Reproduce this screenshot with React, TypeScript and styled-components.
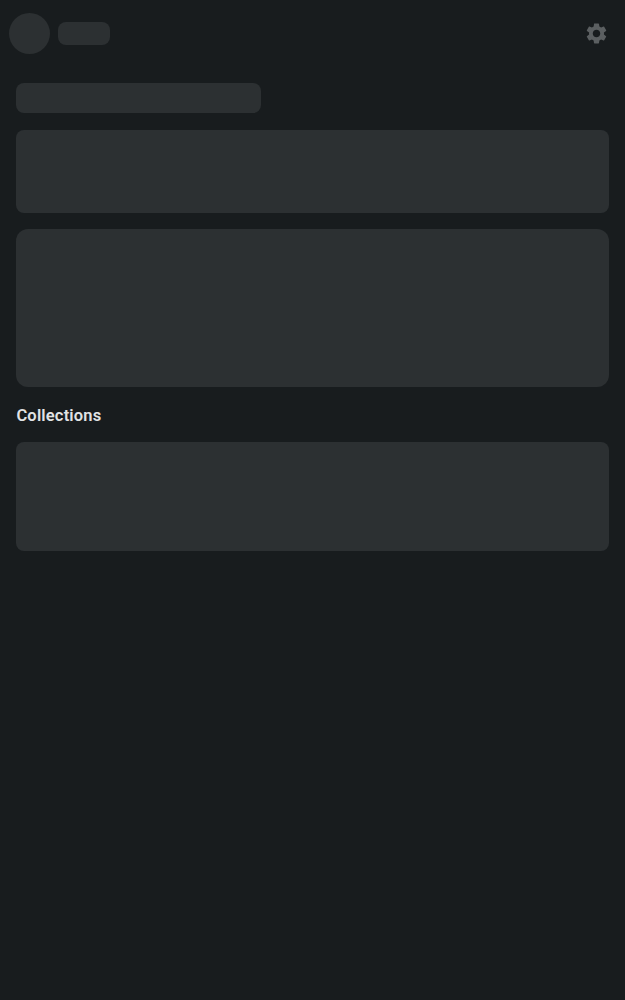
import React from 'react';
import styled, { createGlobalStyle } from 'styled-components';
import { MdSettings } from 'react-icons/md';

const GlobalStyle = createGlobalStyle`
  * { box-sizing: border-box; }
  body {
    margin: 0;
    background: #181c1e;
    font-family: Roboto, sans-serif;
  }
`;

const Screen = styled.div`
  min-height: 100vh;
  background: #181c1e;
`;

const Header = styled.header`
  display: flex;
  align-items: center;
  height: 66px;
  padding: 0 16px 0 8.5px;
`;

const Placeholder = styled.div<{ $height: number; $width?: string; $radius?: number }>`
  flex: none;
  width: ${({ $width = '100%' }) => $width};
  height: ${({ $height }) => $height}px;
  border-radius: ${({ $radius = 8 }) => $radius}px;
  background: #2c3032;
`;

const Profile = styled.div`
  display: flex;
  align-items: center;
  gap: 8px;
  padding-top: 1px;
`;

const SettingsButton = styled.button`
  display: flex;
  margin-left: auto;
  padding: 0;
  border: 0;
  background: none;
  color: #5b5f61;
`;

const Content = styled.main`
  display: flex;
  flex-direction: column;
  gap: 16.5px;
  padding: 17px 16.4px 0;
`;

const Heading = styled.h2`
  margin: 0;
  padding-top: 3px;
  font-size: 16.5px;
  line-height: 19.5px;
  font-weight: 600;
  letter-spacing: 0.18px;
  color: #e1e3e5;
`;

export default function App() {
  return (
    <Screen>
      <GlobalStyle />
      <Header>
        <Profile>
          <Placeholder $width="41.5px" $height={41.5} $radius={21} />
          <Placeholder $width="52px" $height={22.5} />
        </Profile>
        <SettingsButton aria-label="Settings">
          <MdSettings size={25} />
        </SettingsButton>
      </Header>
      <Content>
        <Placeholder $width="244.5px" $height={30} />
        <Placeholder $height={83} />
        <Placeholder $height={157.5} $radius={12} />
        <Heading>Collections</Heading>
        <Placeholder $height={108.5} />
      </Content>
    </Screen>
  );
}
